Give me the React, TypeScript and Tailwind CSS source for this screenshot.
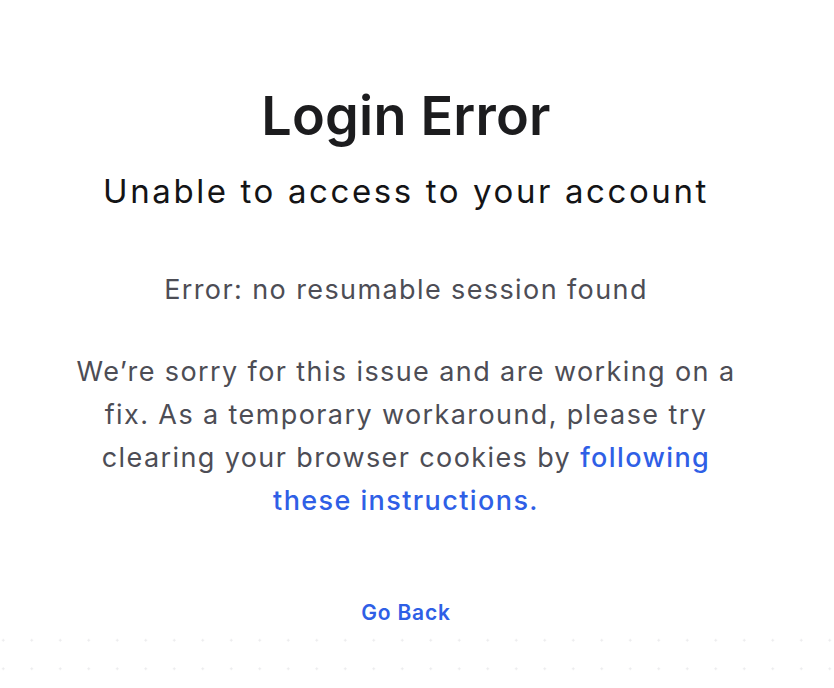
export default function App() {
  return (
    <div className="min-h-screen bg-white bg-[radial-gradient(#ececee_1.2px,transparent_1.3px)] bg-[length:28.5px_28.5px] bg-[position:-11px_-1px] font-['Inter',sans-serif]">
      <div className="bg-white h-[634px] flex flex-col items-center pt-[86px] pr-[22px]">
        <h1 className="text-[54px] leading-[60px] font-semibold text-[#1c1c1e] tracking-[0.2px]">Login Error</h1>
        <h2 className="mt-[23px] text-[33px] leading-[44px] text-[#141416] tracking-[2.6px]">
          Unable to access to your account
        </h2>
        <p className="mt-[57px] text-[27px] leading-[40px] text-[#4d4d55] tracking-[1.4px]">
          Error: no resumable session found
        </p>
        <p className="mt-[40px] w-[676px] text-center text-[27px] leading-[43px] text-[#4d4d55] tracking-[1.4px]">
          We’re sorry for this issue and are working on a fix. As a temporary workaround, please try clearing your
          browser cookies by{' '}
          <a href="#" className="font-medium text-[#2f5fe6]">
            following these instructions.
          </a>
        </p>
        <a href="#" className="mt-[76px] text-[21px] leading-[30px] font-semibold text-[#2f5fe6] tracking-[0.8px]">
          Go Back
        </a>
      </div>
    </div>
  );
}
